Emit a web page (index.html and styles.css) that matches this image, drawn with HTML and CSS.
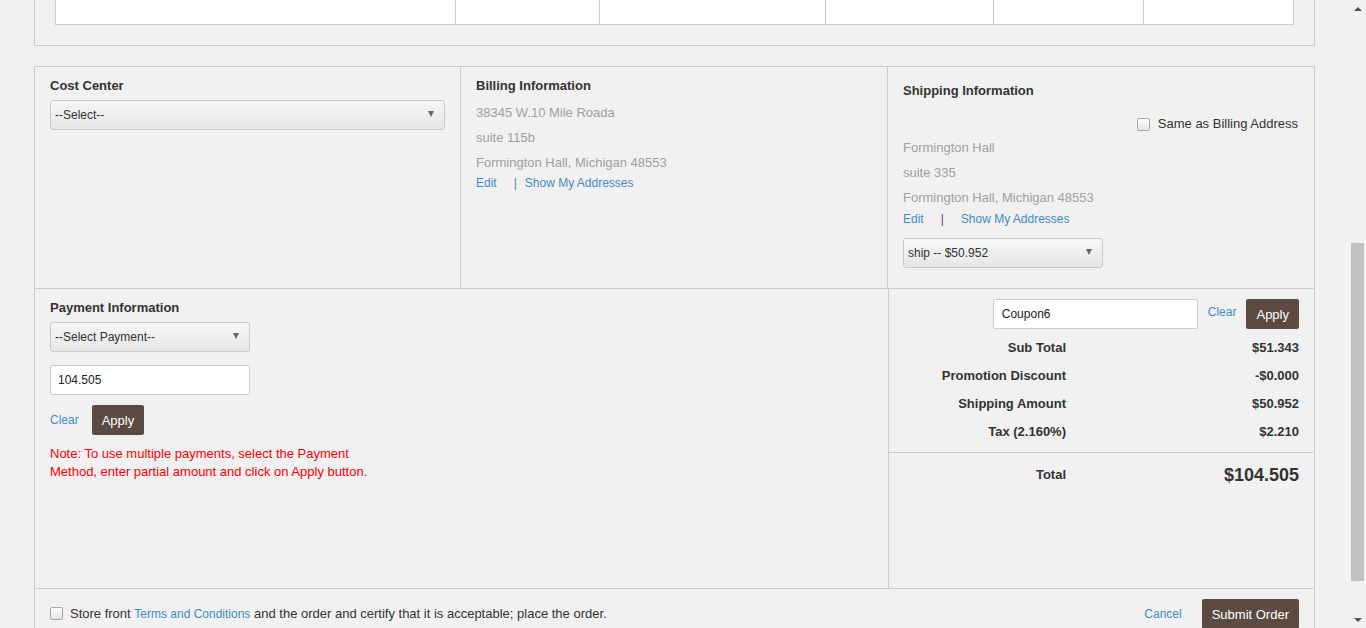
FILE: index.html
```html
<!DOCTYPE html>
<html lang="en">
<head>
<meta charset="utf-8">
<title>Checkout</title>
<link rel="stylesheet" href="styles.css">
</head>
<body>
<div class="page">
  <main class="content">
    <section class="panel panel-top">
      <div class="items-table">
        <div class="cell"></div>
        <div class="cell"></div>
        <div class="cell"></div>
        <div class="cell"></div>
        <div class="cell"></div>
        <div class="cell"></div>
      </div>
    </section>

    <section class="panel checkout">
      <div class="row-info">
        <div class="col col-cost">
          <h3 class="heading">Cost Center</h3>
          <div class="select select-cost"><span class="select-value">--Select--</span><span class="caret"></span></div>
        </div>
        <div class="col col-billing">
          <h3 class="heading">Billing Information</h3>
          <div class="address">
            <p>38345 W.10 Mile Roada</p>
            <p>suite 115b</p>
            <p>Formington Hall, Michigan 48553</p>
          </div>
          <div class="addr-links"><a href="#">Edit</a><span class="sep">|</span><a href="#">Show My Addresses</a></div>
        </div>
        <div class="col col-shipping">
          <h3 class="heading">Shipping Information</h3>
          <label class="same-billing"><input type="checkbox" class="check"><span>Same as Billing Address</span></label>
          <div class="address">
            <p>Formington Hall</p>
            <p>suite 335</p>
            <p>Formington Hall, Michigan 48553</p>
          </div>
          <div class="addr-links"><a href="#">Edit</a><span class="sep sep-ship">|</span><a href="#">Show My Addresses</a></div>
          <div class="select select-ship"><span class="select-value">ship -- $50.952</span><span class="caret"></span></div>
        </div>
      </div>

      <div class="row-pay">
        <div class="col col-payment">
          <h3 class="heading">Payment Information</h3>
          <div class="select select-pay"><span class="select-value">--Select Payment--</span><span class="caret"></span></div>
          <input type="text" class="field field-amount" value="104.505">
          <div class="pay-actions">
            <a href="#">Clear</a>
            <button class="btn" type="button">Apply</button>
          </div>
          <p class="note">Note: To use multiple payments, select the Payment Method, enter partial amount and click on Apply button.</p>
        </div>
        <div class="col-summary">
          <div class="summary-top">
            <div class="coupon">
              <input type="text" class="field field-coupon" value="Coupon6">
              <a href="#" class="coupon-clear">Clear</a>
              <button class="btn" type="button">Apply</button>
            </div>
            <div class="totals">
              <span class="label">Sub Total</span><span class="value">$51.343</span>
              <span class="label">Promotion Discount</span><span class="value">-$0.000</span>
              <span class="label">Shipping Amount</span><span class="value">$50.952</span>
              <span class="label">Tax (2.160%)</span><span class="value">$2.210</span>
            </div>
          </div>
          <div class="totals total-row">
            <span class="label">Total</span><span class="value grand">$104.505</span>
          </div>
        </div>
      </div>

      <div class="footer">
        <label class="terms"><input type="checkbox" class="check"><span>Store front <a href="#">Terms and Conditions</a> and the order and certify that it is acceptable; place the order.</span></label>
        <div class="footer-actions">
          <a href="#">Cancel</a>
          <button class="btn" type="button">Submit Order</button>
        </div>
      </div>
    </section>
  </main>

  <aside class="scrollbar">
    <div class="sb-btn"><span class="tri-up"></span></div>
    <div class="sb-thumb"></div>
    <div class="sb-rest"></div>
    <div class="sb-btn"><span class="tri-down"></span></div>
  </aside>
</div>
</body>
</html>
```

FILE: styles.css
```css
* { box-sizing: border-box; }

html, body {
  margin: 0;
  height: 628px;
  overflow: hidden;
}

body {
  background: #f1f1f1;
  font-family: "Liberation Sans", Arial, sans-serif;
  font-size: 13px;
  color: #333;
}

a {
  color: #428bca;
  text-decoration: none;
  font-size: 12px;
}

.page {
  display: flex;
  height: 628px;
}

.content {
  flex: 1;
  min-width: 0;
  padding: 0 34px;
}

.panel {
  border: 1px solid #ccc;
  background: #f1f1f1;
}

/* top (scrolled) panel with table */
.panel-top {
  border-top: none;
  padding: 0 20px 20px;
}

.items-table {
  display: grid;
  grid-template-columns: 400px 144px 226px 168px 150px 149px;
  height: 25px;
  background: #fff;
  border: 1px solid #ccc;
  border-top: none;
}

.items-table .cell {
  border-right: 1px solid #ccc;
}

.items-table .cell:last-child {
  border-right: none;
}

/* checkout panel */
.checkout {
  margin-top: 20px;
}

.row-info {
  display: grid;
  grid-template-columns: 426px 427px 1fr;
  height: 222px;
  border-bottom: 1px solid #ccc;
}

.col {
  padding: 9px 15px 0;
}

.col-cost,
.col-billing {
  border-right: 1px solid #ccc;
}

.col-shipping {
  padding-top: 14px;
}

.heading {
  margin: 0;
  font-size: 13px;
  font-weight: bold;
  line-height: 20px;
  color: #333;
}

.select {
  display: flex;
  align-items: center;
  justify-content: space-between;
  height: 30px;
  margin-top: 4px;
  padding: 0 10px 0 4px;
  border: 1px solid #c9c9c9;
  border-radius: 3px;
  background: linear-gradient(#f7f7f7, #e6e6e6);
  font-size: 12px;
  color: #333;
}

.caret {
  width: 0;
  height: 0;
  margin-top: -3px;
  border-left: 3.5px solid transparent;
  border-right: 3.5px solid transparent;
  border-top: 6px solid #666;
}

.select-cost { width: 395px; }
.select-pay { width: 200px; }
.select-ship { width: 200px; margin-top: 10px; }

.address {
  margin-top: 4px;
}

.address p {
  margin: 0;
  line-height: 25px;
  color: #a0a0a0;
}

.col-shipping .address {
  margin-top: 1px;
}

.addr-links {
  padding-top: 1px;
  line-height: 17px;
  font-size: 12px;
}

.col-billing .addr-links {
  padding-top: 0;
}

.sep {
  color: #428bca;
  margin: 0 8px 0 17px;
}

.sep-ship {
  color: #8d2f83;
  margin: 0 17px 0 17px;
}

.same-billing {
  display: flex;
  justify-content: flex-end;
  align-items: center;
  gap: 8px;
  margin-top: 13px;
  padding-right: 1px;
  line-height: 20px;
  color: #333;
}

.check {
  appearance: none;
  -webkit-appearance: none;
  width: 13px;
  height: 13px;
  margin: 0;
  border: 1px solid #a9a9a9;
  border-radius: 2px;
  background: linear-gradient(#fdfdfd, #e4e4e4);
  flex: none;
}

/* payment row */
.row-pay {
  display: grid;
  grid-template-columns: 854px 1fr;
  height: 300px;
  border-bottom: 1px solid #ccc;
}

.col-payment {
  border-right: 1px solid #ccc;
}

.col-payment .select {
  margin-top: 4px;
}

.field {
  display: block;
  height: 30px;
  border: 1px solid #ccc;
  border-radius: 2px;
  background: #fff;
  font-family: inherit;
  font-size: 12px;
  color: #222;
  padding: 0 7px;
}

.field-amount {
  width: 200px;
  margin-top: 13px;
}

.pay-actions {
  display: flex;
  align-items: center;
  gap: 13px;
  margin-top: 10px;
}

.btn {
  height: 30px;
  padding: 0 10px;
  border: none;
  border-radius: 2px;
  background: #5b4b43;
  color: #fff;
  font-family: inherit;
  font-size: 13px;
}

.note {
  width: 330px;
  margin: 10px 0 0;
  color: #f00;
  font-size: 13px;
  line-height: 18px;
}

/* summary */
.summary-top {
  padding: 10px 15px 6px;
}

.coupon {
  display: flex;
  justify-content: flex-end;
  align-items: flex-start;
  gap: 10px;
}

.field-coupon {
  width: 205px;
  padding: 0 8px;
}

.coupon-clear {
  line-height: 17px;
  margin-top: 5px;
}

.totals {
  display: grid;
  grid-template-columns: 162px 1fr;
  margin-top: 5px;
  line-height: 28px;
  font-weight: bold;
  color: #333;
}

.totals .label,
.totals .value {
  text-align: right;
}

.total-row {
  margin-top: 0;
  padding: 8px 15px 0;
  border-top: 1px solid #ccc;
}

.grand {
  font-size: 18px;
}

/* footer */
.footer {
  display: flex;
  justify-content: space-between;
  align-items: center;
  padding: 10px 15px 0;
}

.terms {
  display: flex;
  align-items: center;
  gap: 7px;
  color: #333;
  margin-top: -1px;
}

.footer-actions {
  display: flex;
  align-items: center;
  gap: 20px;
}

/* fake page scrollbar (page is scrolled) */
.scrollbar {
  width: 17px;
  display: flex;
  flex-direction: column;
  background: #f1f1f1;
}

.sb-btn {
  height: 17px;
  display: flex;
  align-items: center;
  justify-content: center;
  flex: none;
}

.tri-up {
  width: 0;
  height: 0;
  border-left: 4px solid transparent;
  border-right: 4px solid transparent;
  border-bottom: 4px solid #505050;
}

.tri-down {
  width: 0;
  height: 0;
  border-left: 4px solid transparent;
  border-right: 4px solid transparent;
  border-top: 4px solid #505050;
}

.sb-thumb {
  margin: 226px 2px 0;
  height: 338px;
  background: #c1c1c1;
  flex: none;
}

.sb-rest {
  flex: 1;
}
```
